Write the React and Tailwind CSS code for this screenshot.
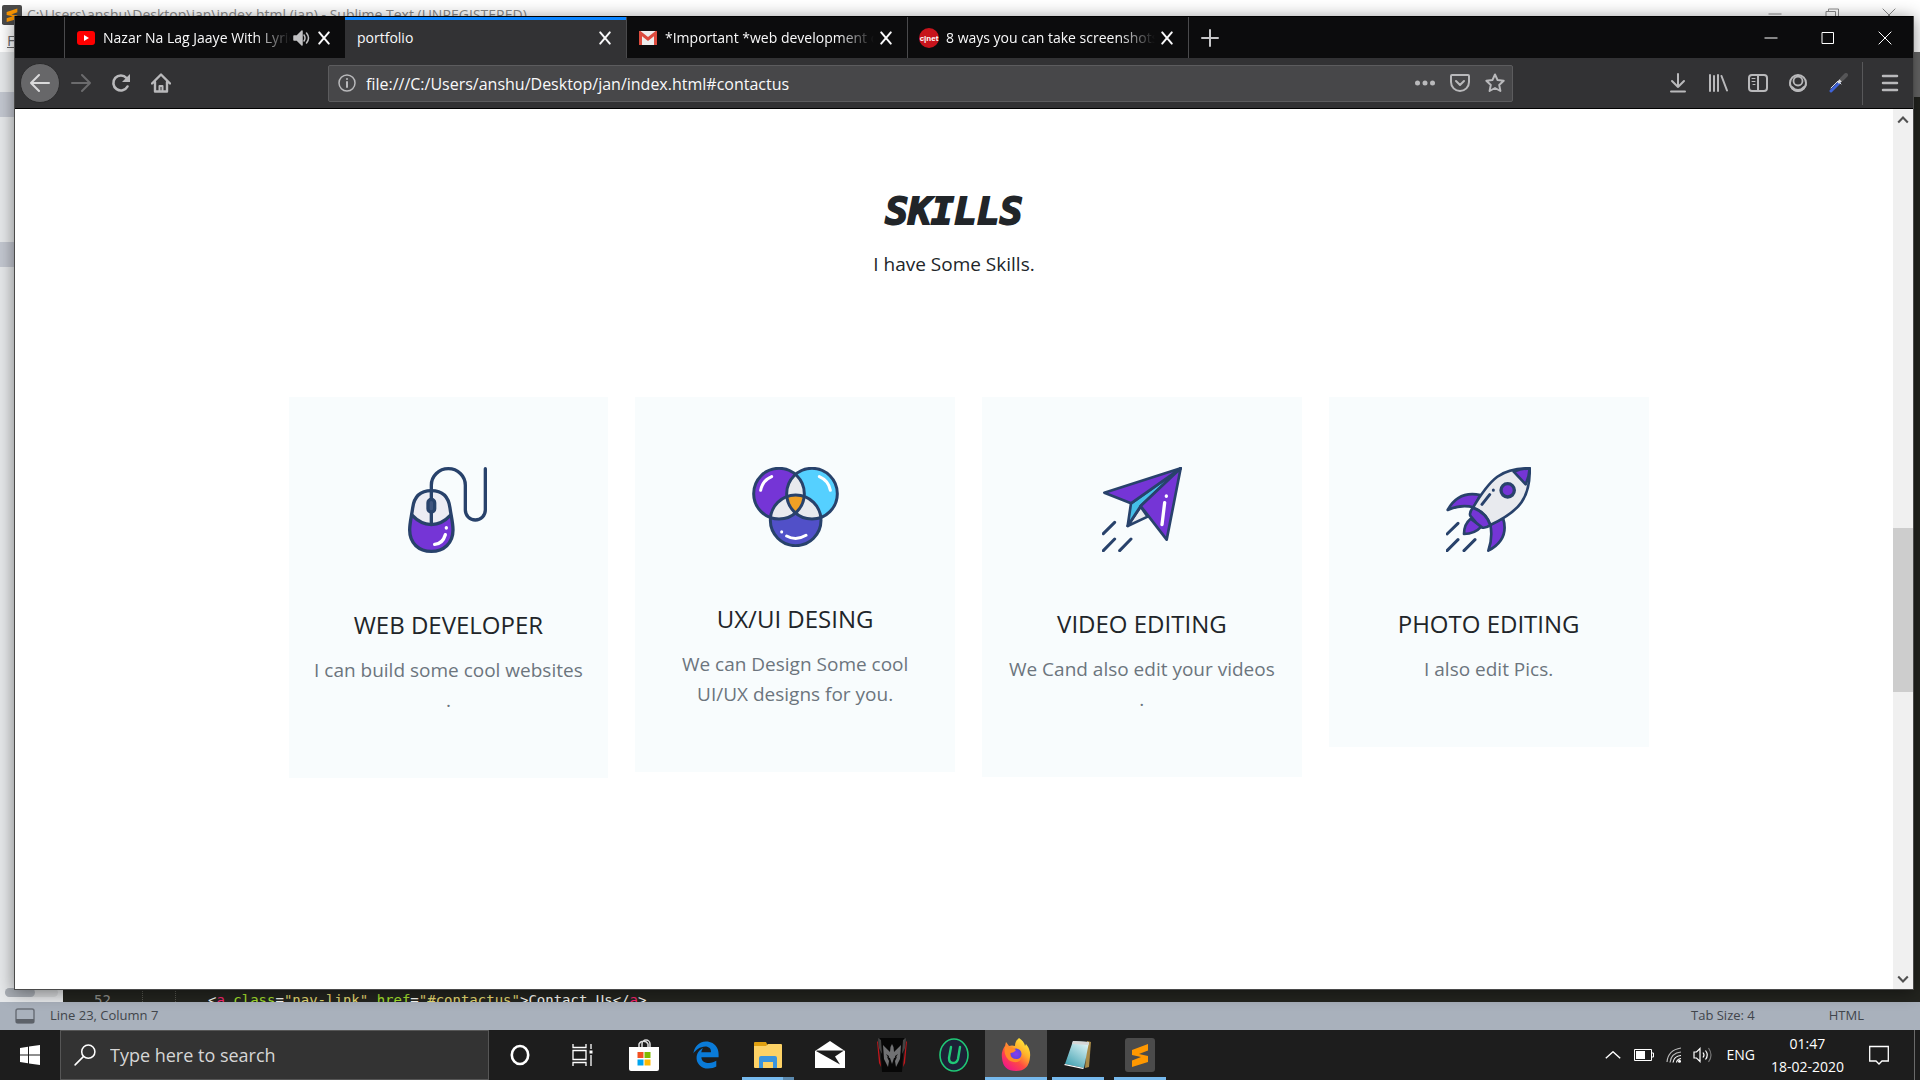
import React from "react";
import { FaEdgeLegacy } from "react-icons/fa";

/* ---------- skill illustrations ---------- */

const NAVY = "#28426b";
const PURPLE = "#7535d6";

function MouseArt() {
  return (
    <svg viewBox="387 231 240 258" className="h-[86px] w-[80px]" fill="none" stroke={NAVY} strokeWidth="10" strokeLinecap="round" strokeLinejoin="round" aria-hidden="true">
      <path d="M457 302V286a51 50 0 0 1 102 0v74a30 30 0 0 0 60 0V236" />
      <path d="M400 374q-8 28-8 46c0 40 28 64 65 64s65-24 65-64q0-18-8-46-24 28-57 28t-57-28z" fill={PURPLE} stroke="none" />
      <path d="M400 374q2-72 57-72t57 72q-24 28-57 30-33-2-57-30z" fill="#ececf4" stroke="none" />
      <path d="M457 302c-34 0-52 20-56 52-3 24-9 44-9 66 0 40 28 64 65 64s65-24 65-64c0-22-6-42-9-66-4-32-22-52-56-52z" />
      <path d="M400 376q24 26 57 28 33-2 57-28M457 302v100" />
      <rect x="447" y="328" width="20" height="38" rx="10" fill="#40557f" />
      <path d="M467 463q24-2 32-29M502 413v1" stroke="#fff" strokeWidth="10" />
    </svg>
  );
}

function CirclesArt() {
  return (
    <svg viewBox="366 231 261 240" className="h-[80px] w-[87px]" fill="none" stroke={NAVY} strokeWidth="9" strokeLinecap="round" aria-hidden="true">
      <defs>
        <clipPath id="left-disc"><circle cx="447" cy="311" r="76" /></clipPath>
        <clipPath id="right-disc"><circle cx="546" cy="311" r="76" /></clipPath>
      </defs>
      <g stroke="none">
        <circle cx="447" cy="311" r="76" fill={PURPLE} />
        <circle cx="546" cy="311" r="76" fill="#55d0ff" />
        <circle cx="497" cy="391" r="76" fill="#5150c8" />
        <g clipPath="url(#left-disc)">
          <circle cx="546" cy="311" r="76" fill="#e8eaee" />
          <circle cx="497" cy="391" r="76" fill="#e8eaee" />
        </g>
        <g clipPath="url(#right-disc)">
          <circle cx="497" cy="391" r="76" fill="#e8eaee" />
          <g clipPath="url(#left-disc)"><circle cx="497" cy="391" r="76" fill="#f0a024" /></g>
        </g>
      </g>
      <circle cx="447" cy="311" r="76" />
      <circle cx="546" cy="311" r="76" />
      <circle cx="497" cy="391" r="76" />
      <path d="M392 301q5-29 33-41M568 260q28 12 33 41M470 438q28 16 58-2M455 425v1" stroke="#fff" />
    </svg>
  );
}

function PlaneArt() {
  return (
    <svg viewBox="396 231 240 255" className="h-[85px] w-[80px]" fill="none" stroke={NAVY} strokeWidth="8" strokeLinecap="round" strokeLinejoin="round" aria-hidden="true">
      <path d="M512 350l-39 58 60-28z" fill="#e8eaee" />
      <path d="M632 235L483 340l-10 68 39-60z" fill="#45bfe8" />
      <path d="M632 235L403 308l80 32z" fill={PURPLE} />
      <path d="M632 235L512 348l78 101z" fill={PURPLE} />
      <path d="M434 397l-34 34M434 447l-34 35M483 447l-34 35" strokeWidth="9" />
      <path d="M584 338l-8 66M589 318v1" stroke="#fff" strokeWidth="10" />
    </svg>
  );
}

function RocketArt() {
  return (
    <svg viewBox="381 231 255 255" className="h-[85px] w-[85px]" fill="none" stroke={NAVY} strokeWidth="8" strokeLinecap="round" strokeLinejoin="round" aria-hidden="true">
      <path d="M484 315q-66-14-98 45 40-18 78-8z" fill={PURPLE} />
      <path d="M552 384q20 64-44 98 14-40 6-78z" fill={PURPLE} />
      <path d="M455 386q-20 16-20 46 32 0 52-22z" fill={PURPLE} />
      <path d="M632 235c-84-2-118 30-170 118 24 8 44 28 52 52 90-42 120-84 118-170z" fill="#e8eaee" />
      <path d="M632 235q-22 0-48 10l36 38q11-24 12-48z" fill={PURPLE} />
      <path d="M462 353q-12 14-8 24 16 22 36 36 12 2 24-8-12-36-52-52z" fill={PURPLE} />
      <circle cx="566" cy="301" r="20" fill={PURPLE} strokeWidth="10" />
      <path d="M512 314l-23 29M523 300v1M417 400l-33 32M417 449l-33 33M468 449l-33 33" strokeWidth="9" />
    </svg>
  );
}

/* ---------- small shared glyphs ---------- */

function Glyph({ size = "size-5", children, ...rest }) {
  return (
    <svg viewBox="0 0 20 20" className={`${size} shrink-0`} fill="none" stroke="currentColor" strokeWidth="2" strokeLinecap="round" strokeLinejoin="round" aria-hidden="true" {...rest}>
      {children}
    </svg>
  );
}

function SublimeLogo({ className }) {
  return (
    <svg viewBox="0 0 30 34" className={className} preserveAspectRatio="none" aria-hidden="true">
      <rect width="30" height="34" rx="3" fill="#4b4b4b" />
      <path d="M7 12l16-6v6.500l-9 3.500 9 2v6L7 29v-6.500l9-3.500-9-2z" fill="#ff9800" />
    </svg>
  );
}

/* ---------- browser ---------- */

const youtube = (
  <svg viewBox="0 0 18 16" className="h-4 w-[18px] shrink-0" aria-hidden="true">
    <rect y="1" width="18" height="14" rx="3" fill="#f00" />
    <path d="M7 5l5 3-5 3z" fill="#fff" />
  </svg>
);
const gmail = (
  <svg viewBox="0 0 18 14" className="h-[14px] w-[18px] shrink-0" aria-hidden="true">
    <rect width="18" height="14" rx="1" fill="#eee" />
    <path d="M1.500 14V2L9 8l7.500-6v12" fill="none" stroke="#dc4b3e" strokeWidth="3" />
  </svg>
);
const cnet = (
  <svg viewBox="0 0 20 20" className="size-5 shrink-0" aria-hidden="true">
    <circle cx="10" cy="10" r="10" fill="#c8141c" />
    <text x="10" y="13" textAnchor="middle" fontSize="8" fontWeight="700" fill="#fff" fontFamily="Liberation Sans Narrow, Liberation Sans, sans-serif">c|net</text>
  </svg>
);

const tabs = [
  { title: "Nazar Na Lag Jaaye With Lyrics", icon: youtube, sound: true },
  { title: "portfolio", active: true },
  { title: "*Important *web development course", icon: gmail },
  { title: "8 ways you can take screenshots", icon: cnet },
];

function Tab({ title, icon, active, sound }) {
  return (
    <div className={`flex w-[281px] items-center pl-3 pr-[13px] ${active ? "border-t-[3px] border-[#0a84ff] bg-[#323234] pb-[3px]" : "border-l border-[#4a4a4c]"}`}>
      {icon && <span className="mr-2 flex w-[18px] justify-center">{icon}</span>}
      <button type="button" className={`min-w-0 flex-1 overflow-hidden whitespace-nowrap pt-px text-left text-sm text-[#f9f9fa] ${active ? "" : "[mask-image:linear-gradient(to_left,transparent,black_36px)]"}`}>
        {title}
      </button>
      {sound && (
        <button type="button" aria-label="Mute tab" className="mr-px text-[#c0c0c2]">
          <Glyph strokeWidth="1.500">
            <path d="M3 8h3l5-5v14l-5-5H3z" fill="currentColor" />
            <path d="M13 7q2 3 0 6M15.500 5q4 5 0 10" />
          </Glyph>
        </button>
      )}
      <button type="button" aria-label={`Close ${title}`} className="ml-1 text-[#f9f9fa]">
        <Glyph size="size-4"><path d="M4 3l12 14M16 3L4 17" strokeWidth="2.500" /></Glyph>
      </button>
    </div>
  );
}

function TabStrip() {
  return (
    <div className="flex h-[42px] border-t border-black bg-[#0c0c0d]">
      <div className="w-[49px]" />
      {tabs.map((t) => <Tab key={t.title} {...t} />)}
      <button type="button" aria-label="New tab" className="flex w-[42px] items-center justify-center border-l border-[#4a4a4c] text-[#c6c6c8]">
        <Glyph><path d="M10 2v16M2 10h16" /></Glyph>
      </button>
      <div className="ml-auto flex text-white">
        <WinButton label="Minimize"><path d="M4 10h12" /></WinButton>
        <WinButton label="Maximize"><path d="M4.500 4.500h11v11h-11z" /></WinButton>
        <WinButton label="Close"><path d="M4 4l12 12M16 4L4 16" /></WinButton>
      </div>
    </div>
  );
}

function WinButton({ label, children }) {
  return (
    <button type="button" aria-label={label} className="flex w-[57px] items-center justify-center">
      <Glyph strokeWidth="1" strokeLinecap="square" strokeLinejoin="miter">{children}</Glyph>
    </button>
  );
}

function ToolButton({ label, children, className = "" }) {
  return (
    <button type="button" aria-label={label} className={`flex size-10 shrink-0 items-center justify-center ${className}`}>
      <Glyph>{children}</Glyph>
    </button>
  );
}

function Toolbar() {
  return (
    <div className="flex h-[51px] items-center border-b border-black bg-[#323234] pl-[5px] text-[#b9b9bb]">
      <ToolButton label="Back" className="rounded-full border border-[#2a2a2b] bg-[#676769] text-[#dadadb]"><path d="M1 10h18M9 2l-8 8 8 8" /></ToolButton>
      <ToolButton label="Forward" className="ml-px text-[#6b6b6d]"><path d="M1 10h18M11 2l8 8-8 8" /></ToolButton>
      <ToolButton label="Reload">
        <path d="M16.500 13.500a7.500 7.500 0 1 1-1-8.500" strokeWidth="2.600" />
        <path d="M19 1v8h-8z" fill="currentColor" stroke="none" />
      </ToolButton>
      <ToolButton label="Home">
        <path d="M1 10.500L10 1.500l9 9M4 9v9.500h12V9" strokeWidth="2.400" />
        <path d="M8.500 18v-5h3v5" />
      </ToolButton>
      <div className="ml-[147px] mr-[145px] flex h-[37px] flex-1 items-center rounded-[2px] border border-[#5c5c5e] bg-[#474749] pl-2">
        <Glyph strokeWidth="1.500">
          <circle cx="10" cy="10" r="8" />
          <path d="M10 9v5M10 6v.1" strokeWidth="2" />
        </Glyph>
        <input aria-label="Address" defaultValue="file:///C:/Users/anshu/Desktop/jan/index.html#contactus" className="ml-[9px] min-w-0 flex-1 bg-transparent pt-[2px] text-base text-[#f9f9fa] outline-none" />
        <button type="button" aria-label="Page actions" className="flex w-[35px] justify-center">
          <Glyph fill="currentColor" stroke="none"><circle cx="2.500" cy="10" r="2.500" /><circle cx="10" cy="10" r="2.500" /><circle cx="17.500" cy="10" r="2.500" /></Glyph>
        </button>
        <button type="button" aria-label="Save to Pocket" className="flex w-[35px] justify-center">
          <Glyph><path d="M2 2h16a1 1 0 0 1 1 1v6a9 9 0 0 1-18 0V3a1 1 0 0 1 1-1z" /><path d="M6 8l4 4 4-4" /></Glyph>
        </button>
        <button type="button" aria-label="Bookmark" className="flex w-[35px] justify-center">
          <Glyph><path d="M10 1.500l2.600 5.600 6.100.7-4.500 4.100 1.200 6.100L10 15l-5.400 3 1.200-6.100L1.300 7.800l6.100-.7z" /></Glyph>
        </button>
      </div>
      <ToolButton label="Downloads"><path d="M10 1v13M4 8l6 6 6-6M3 18.500h14" /></ToolButton>
      <ToolButton label="Library"><path d="M2 2v16M6 3v15M10 2v16M13.500 3L19 17.500" /></ToolButton>
      <ToolButton label="Sidebars">
        <rect x="1" y="2" width="18" height="16" rx="3" />
        <path d="M10 2v16" /><path d="M4 5.500h3M4 8.500h3M5 11.500h2" strokeWidth="1" />
      </ToolButton>
      <ToolButton label="Account">
        <path d="M1 10a9 9 0 0 0 18 0q-1.500 3-4 3.500-2 2.500-5 2.500t-5-2.500Q2.500 13 1 10z" fill="currentColor" stroke="none" />
        <circle cx="10" cy="10" r="8" />
        <circle cx="10" cy="8" r="4.500" strokeWidth="1.800" />
      </ToolButton>
      <ToolButton label="Color picker">
        <path d="M3 18l8-8" stroke="#3f63d8" strokeWidth="3" />
        <path d="M3 15l7-7 3 3" stroke="#d8dcec" strokeWidth="1" />
        <path d="M11 9l3-3" stroke="#ddd" strokeWidth="3" />
        <path d="M14 6l4-4" stroke="#555557" strokeWidth="4" />
      </ToolButton>
      <div className="ml-1 h-[43px] w-px bg-[#58585a]" />
      <ToolButton label="Menu" className="ml-[7px] mr-[3px]"><path d="M3 3h14M3 10h14M3 17h14" strokeWidth="2.500" /></ToolButton>
    </div>
  );
}

const skills = [
  { art: <MouseArt />, title: "WEB DEVELOPER", text: ["I can build some cool websites", "."] },
  { art: <CirclesArt />, title: "UX/UI DESING", text: ["We can Design Some cool", "UI/UX designs for you."] },
  { art: <PlaneArt />, title: "VIDEO EDITING", text: ["We Cand also edit your videos", "."] },
  { art: <RocketArt />, title: "PHOTO EDITING", text: ["I also edit Pics."] },
];

function Portfolio() {
  return (
    <main className="min-w-0 flex-1 bg-white pt-[75px] text-center text-[#212529]">
      <h1 className="font-['DejaVu_Sans_Mono',monospace] text-[38px] font-bold italic leading-[54px] [-webkit-text-stroke:2px_#212529] [stroke-linejoin:round]">SKILLS</h1>
      <p className="mt-[11px] text-[19px] leading-[30px]">I have Some Skills.</p>
      <div className="pl-[29px]">
        <section className="mx-auto mt-[118px] grid max-w-[1360px] grid-cols-4 items-start gap-[27px]">
          {skills.map((s) => (
            <article key={s.title} className="flex flex-col items-center bg-[#f8fcfd] pb-[63px] pt-[70px]">
              {s.art}
              <h2 className="mt-[57px] text-2xl leading-[30px]">{s.title}</h2>
              <p className="mt-[15px] text-[19px] leading-[30px] text-[#6c757d]">
                {s.text.map((line) => <span key={line} className="block">{line}</span>)}
              </p>
            </article>
          ))}
        </section>
      </div>
    </main>
  );
}

function Browser() {
  return (
    <div className="absolute bottom-[90px] left-[14px] right-[6px] top-4 flex flex-col overflow-hidden border-x border-b border-[#4a4a4a] shadow-[0_2px_16px_rgba(0,0,0,0.45)]">
      <TabStrip />
      <Toolbar />
      <div className="flex min-h-0 flex-1">
        <Portfolio />
        <div className="flex w-[20px] flex-col items-center bg-[#f0f0f0] text-[#505050]">
          <button type="button" aria-label="Scroll up" className="flex h-[21px] items-center"><Glyph size="size-3" strokeWidth="3.500" strokeLinecap="butt" strokeLinejoin="miter"><path d="M2 14l8-8 8 8" /></Glyph></button>
          <div className="flex w-full flex-1 flex-col">
            <div className="grow-[398]" />
            <div className="grow-[164] bg-[#cdcdcd]" />
            <div className="grow-[276]" />
          </div>
          <button type="button" aria-label="Scroll down" className="flex h-[21px] items-center"><Glyph size="size-3" strokeWidth="3.500" strokeLinecap="butt" strokeLinejoin="miter"><path d="M2 6l8 8 8-8" /></Glyph></button>
        </div>
      </div>
    </div>
  );
}

/* ---------- text editor behind the browser ---------- */

function Editor() {
  return (
    <>
      <div className="flex h-7 items-center bg-white pl-[2px] pr-[3px] pt-[2px] text-sm text-[#8a8a8a]">
        <SublimeLogo className="h-5 w-5" />
        <span className="ml-[5px] whitespace-nowrap">C:\Users\anshu\Desktop\jan\index.html (jan) - Sublime Text (UNREGISTERED)</span>
        <div className="ml-auto flex">
          <WinButton label="Minimize editor"><path d="M4 9h12" /></WinButton>
          <WinButton label="Restore editor"><path d="M4.500 6.500h9v9h-9zM6.500 6V4h10v9H14" /></WinButton>
          <WinButton label="Close editor"><path d="M4 4l12 12M16 4L4 16" /></WinButton>
        </div>
      </div>
      <div className="flex h-6 items-center bg-white pl-[7px] pt-px text-[15px] text-[#6a6a6a]"><u>F</u></div>
      <div className="flex min-h-0 flex-1 overflow-hidden">
        <div className="flex w-[63px] flex-col bg-[#e6e8ea]">
          <div className="mt-10 h-[25px] bg-[#c3c7d0]" />
          <div className="mt-[125px] h-[25px] bg-[#c3c7d0]" />
          <div className="mx-[5px] mb-[5px] mt-auto h-[9px] rounded-full bg-[#d6d8da]"><div className="h-full w-[30px] rounded-full bg-[#a8adb4]" /></div>
        </div>
        <div className="flex flex-1 flex-col bg-[#23241f]">
          <div className="h-[45px] bg-[#686868]" />
          <pre className="mt-auto flex h-[13px] overflow-hidden font-['DejaVu_Sans_Mono',monospace] text-sm leading-[22px] text-[#f8f8f2]">
            <span className="ml-[31px] w-12 text-[#8f908a]">52</span>
            <span className="w-[33px] border-l border-dotted border-[#55564f]" />
            <span className="w-[33px] border-l border-dotted border-[#55564f]" />
            <code className="font-['DejaVu_Sans_Mono',monospace]">{"<"}<span className="text-[#f92672]">a</span> <span className="text-[#a6e22e]">class</span>=<span className="text-[#e6db74]">"nav-link"</span> <span className="text-[#a6e22e]">href</span>=<span className="text-[#e6db74]">"#contactus"</span>{">Contact Us</"}<span className="text-[#f92672]">a</span>{">"}</code>
          </pre>
        </div>
      </div>
      <div className="flex h-7 items-center bg-[#a9b1bc] pl-[15px] pr-[56px] text-[13px] text-[#41454b]">
        <svg viewBox="0 0 20 16" className="h-4 w-5" aria-hidden="true"><rect x="1" y="1" width="18" height="14" rx="2" fill="none" stroke="#6b7078" strokeWidth="1.500" /><path d="M1 11h18v4H1z" fill="#5d6269" /></svg>
        <span className="ml-[15px]">Line 23, Column 7</span>
        <span className="ml-auto">Tab Size: 4</span>
        <span className="ml-[74px]">HTML</span>
      </div>
    </>
  );
}

/* ---------- taskbar ---------- */

const apps = [
  { name: "Cortana", icon: <svg viewBox="0 0 20 22" className="h-[22px] w-5"><ellipse cx="10" cy="11" rx="8.200" ry="9" fill="none" stroke="#fff" strokeWidth="2.600" /></svg> },
  {
    name: "Task View",
    icon: (
      <svg viewBox="0 0 21 22" className="h-[22px] w-[21px]" fill="none" stroke="#fff" strokeWidth="1.300">
        <path d="M1 0v3.500h13V0M1 22v-3.500h13V22M1 6.500h13v9H1zM19 0v5M19 11v11" /><path d="M17.500 6.500h3v3h-3z" fill="#fff" stroke="none" />
      </svg>
    ),
  },
  {
    name: "Store",
    icon: (
      <svg viewBox="0 0 30 34" className="h-[34px] w-[30px]">
        <path d="M10 9V6a5 5 0 0 1 9 0v3M13 9V6a4 4 0 0 1 8 0v3" fill="none" stroke="#ddd" strokeWidth="1.500" />
        <path d="M0 9h30v22a2 2 0 0 1-2 2H2a2 2 0 0 1-2-2z" fill="#fff" />
        <path d="M8.500 14h6v6h-6z" fill="#f25022" /><path d="M15.500 14h6v6h-6z" fill="#7fba00" />
        <path d="M8.500 21.500h6v6h-6z" fill="#00a4ef" /><path d="M15.500 21.500h6v6h-6z" fill="#ffb900" />
      </svg>
    ),
  },
  { name: "Edge", icon: <FaEdgeLegacy className="size-[28px] text-[#0a7bd8]" /> },
  {
    name: "File Explorer", running: "stack",
    icon: (
      <svg viewBox="0 0 28 26" className="h-[26px] w-[28px]">
        <path d="M0 1a1 1 0 0 1 1-1h11l2 4-2 3H0z" fill="#e0a010" />
        <path d="M0 4h12l2-2h13a1 1 0 0 1 1 1v22a1 1 0 0 1-1 1H1a1 1 0 0 1-1-1z" fill="#fdd266" />
        <path d="M5 26V16a2 2 0 0 1 2-2h14a2 2 0 0 1 2 2v10h-4v-6H9v6z" fill="#3b94dd" />
      </svg>
    ),
  },
  {
    name: "Mail",
    icon: (
      <svg viewBox="0 0 30 28" className="h-7 w-[30px]">
        <path d="M0 10L15 0l15 10v17H0z" fill="#fff" /><path d="M2 9.500h27l-9 6 5 8L1 10z" fill="#1c1c1c" />
      </svg>
    ),
  },
  {
    name: "PredatorSense",
    icon: (
      <svg viewBox="0 0 30 34" className="h-[34px] w-[30px]">
        <path d="M3 0h24l-2 34H5z" fill="#070707" />
        <path d="M0 3l1 1 3 25-2-4zM30 3l-1 1-3 25 2-4z" fill="#c3161c" />
        <path d="M1 0l3 2 1 14-3-6zM29 0l-3 2-1 14 3-6z" fill="#444" />
        <path d="M6 7l7 7 .5-5L15 6l1.500 3 .5 5 7-7-1 14-4 8-1-6 2-4-3 1-2 6-2-6-3-1 2 4-1 6-4-8z" fill="#707173" />
        <path d="M9 16l3 2v3zM21 16l-3 2v3z" fill="#111" />
      </svg>
    ),
  },
  {
    name: "IObit Uninstaller",
    icon: (
      <svg viewBox="0 0 30 34" className="h-[34px] w-[30px]" fill="none" stroke="#20c877">
        <ellipse cx="15" cy="17" rx="14" ry="16" fill="#1c2136" strokeWidth="1.600" />
        <path d="M12 9l-2 11q0 5 4 5 4 0 5-4l2-12" strokeWidth="2.400" strokeLinecap="round" />
      </svg>
    ),
  },
  {
    name: "Firefox", running: "active",
    icon: (
      <svg viewBox="0 0 30 34" className="h-[34px] w-[30px]">
        <defs>
          <linearGradient id="fox" x1=".85" y1=".05" x2=".2" y2=".95"><stop offset="0" stopColor="#ffee3e" /><stop offset=".35" stopColor="#ffb02a" /><stop offset=".65" stopColor="#ff4a43" /><stop offset="1" stopColor="#f0168a" /></linearGradient>
          <radialGradient id="globe"><stop offset="0" stopColor="#8a3cf0" /><stop offset="1" stopColor="#5a45e0" /></radialGradient>
        </defs>
        <path d="M18 0q5 3 6 8l1-2q5 6 4 13-1 14-14 14Q2 33 1 20q-1-7 3-12l1-4 3 4q3-1 6 0 0-5 4-8z" fill="url(#fox)" />
        <circle cx="15" cy="16" r="5.500" fill="url(#globe)" />
        <path d="M4 8l4 1q4 0 7 3-2 3-6 3 0 6 7 6 3 0 5-2-2 6-8 5-7-1-9-8-1-4 0-8z" fill="#ff8a28" />
      </svg>
    ),
  },
  {
    name: "Notepad", running: "on",
    icon: (
      <svg viewBox="0 0 30 34" className="h-[34px] w-[30px]">
        <defs><linearGradient id="pad" x1=".8" y1="0" x2=".2" y2="1"><stop offset="0" stopColor="#e2f6f8" /><stop offset="1" stopColor="#3fa0b0" /></linearGradient></defs>
        <path d="M24 3l4 1-2 25-4 1z" fill="#a88a48" /><path d="M10 3l16 1-5 26L2 26z" fill="url(#pad)" />
        <path d="M2 26l19 4-1 1L1 27z" fill="#fff" /><path d="M10 3l16 1-.5 3L9 6z" fill="#d6d6d6" />
      </svg>
    ),
  },
  { name: "Sublime Text", running: "on", icon: <SublimeLogo className="h-[34px] w-[30px]" /> },
];

function AppButton({ name, icon, running }) {
  return (
    <button type="button" aria-label={name} className={`relative flex h-full w-[62px] shrink-0 items-center justify-center ${running === "active" ? "bg-[#4b4b4b]" : ""}`}>
      {icon}
      {running === "active" && <span className="absolute inset-x-0 bottom-0 h-[3px] bg-[#76b9ed]" />}
      {running === "on" && <span className="absolute inset-x-[5px] bottom-0 h-[3px] bg-[#76b9ed]" />}
      {running === "stack" && <span className="absolute inset-x-[5px] bottom-0 h-[3px] border-r-[11px] border-[#5b89ae] bg-[#76b9ed]" />}
    </button>
  );
}

function Taskbar() {
  return (
    <div className="flex h-[50px] items-center bg-[#1d1d1d] text-white">
      <button type="button" aria-label="Start" className="flex h-full w-[60px] items-center justify-center">
        <svg viewBox="0 0 20 20" className="size-5" fill="#fff"><path d="M0 3l8-1.200V9.500H0zM9 1.600L20 0v9.500H9zM0 10.500h8v7.700L0 17zM9 10.500h11V20L9 18.400z" /></svg>
      </button>
      <label className="flex h-full w-[429px] items-center border border-[#565656] bg-[#333] pl-[13px]">
        <Glyph size="size-[22px]" strokeWidth="1.400"><circle cx="13" cy="7" r="6" /><path d="M8.500 11.500L1 19" /></Glyph>
        <input aria-label="Search" placeholder="Type here to search" className="ml-[14px] min-w-0 flex-1 bg-transparent text-lg text-white outline-none placeholder:text-[#d6d6d6] placeholder:opacity-100" />
      </label>
      {apps.map((a) => <AppButton key={a.name} {...a} />)}
      <div className="ml-auto flex h-full items-center text-sm">
        <button type="button" aria-label="Show hidden icons"><Glyph size="size-4" strokeWidth="1.800" strokeLinecap="butt"><path d="M1 14l9-8 9 8" /></Glyph></button>
        <svg viewBox="0 0 20 12" className="ml-[13px] h-3 w-5" aria-hidden="true"><path d="M.5.500h17v11H.5zM17.500 4h2v4h-2" fill="none" stroke="#fff" /><path d="M2 2h9v8H2z" fill="#fff" /></svg>
        <svg viewBox="0 0 16 16" className="ml-3 size-4" fill="none" stroke="#fff" strokeWidth="1.200" aria-hidden="true">
          <path d="M1 15Q2 3 15 1M4 15.500Q5 6 15 5" stroke="#bbb" /><path d="M7 15.500Q8 9 15 8.500M10.500 15.500q.5-3.500 4.500-4" /><circle cx="13.500" cy="14.300" r="1.500" fill="#fff" stroke="none" />
        </svg>
        <svg viewBox="0 0 20 16" className="ml-[11px] h-4 w-5" fill="none" stroke="#fff" strokeWidth="1.200" aria-hidden="true">
          <path d="M1 5h2.500L7 1.500v13L3.500 11H1zM10 5.500q2 2.500 0 5M12.500 3.500q3.500 4.500 0 9" /><path d="M15.500 1q5 7 0 14" stroke="#777" />
        </svg>
        <span className="ml-[13px]">ENG</span>
        <div className="ml-4 text-center leading-[23px]"><div>01:47</div><div>18-02-2020</div></div>
        <button type="button" aria-label="Notifications" className="ml-[25px]">
          <Glyph strokeWidth="1.300" strokeLinecap="square" strokeLinejoin="miter"><path d="M.7 1.500h18.600v14.500H13l-3 3-3-3H.7z" /></Glyph>
        </button>
        <div className="ml-[25px] mr-[5px] h-full w-px bg-[#6a6a6a]" />
      </div>
    </div>
  );
}

export default function App() {
  return (
    <div className="relative flex h-screen flex-col overflow-hidden font-['Open_Sans',sans-serif]">
      <Editor />
      <Taskbar />
      <Browser />
    </div>
  );
}
